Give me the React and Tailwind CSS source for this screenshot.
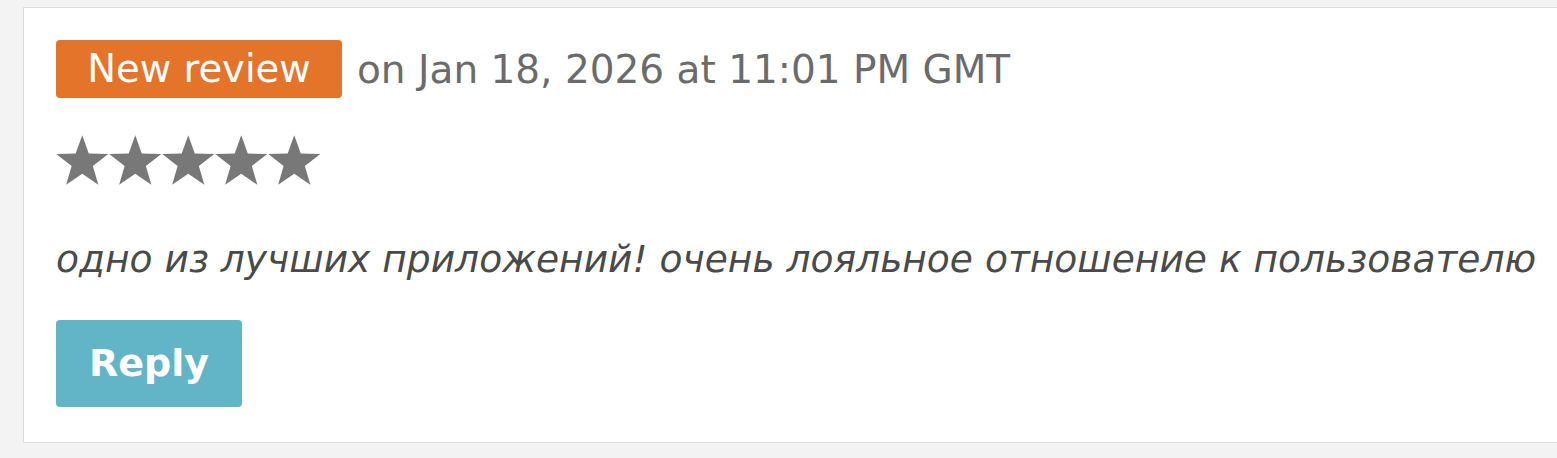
import React from "react";

function Star() {
  return (
    <svg width="52" height="50" viewBox="1 0.6 21.8 20.8" className="block">
      <path d="M12 0.6 L14.75 8.3 L22.9 8.5 L16.45 13.5 L18.75 21.4 L12 16.75 L5.25 21.4 L7.55 13.5 L1.1 8.5 L9.25 8.3 Z" fill="#787878" />
    </svg>
  );
}

export default function App() {
  return (
    <div className="w-[1557px] h-[458px] bg-[#f3f3f3] pt-[7px] pl-[23px] overflow-hidden" style={{ fontFamily: '"DejaVu Sans", Verdana, sans-serif' }}>
      <div className="h-[436px] bg-white border border-r-0 border-[#dcdcdc] pl-[32px] pt-[32px]">
        <div className="flex items-center h-[58px]">
          <span className="h-[58px] w-[286px] flex items-center justify-center rounded-[4px] bg-[#e3742a] text-white text-[38.5px] leading-none whitespace-nowrap">New review</span>
          <span className="ml-[15px] text-[#6b6b6b] text-[39px] leading-none whitespace-nowrap">on Jan 18, 2026 at 11:01 PM GMT</span>
        </div>
        <div className="flex gap-[1px] mt-[37px]">
          <Star /><Star /><Star /><Star /><Star />
        </div>
        <p className="mt-[56px] italic text-[37.6px] leading-none text-[#4a4a4a] whitespace-nowrap">одно из лучших приложений! очень лояльное отношение к пользователю</p>
        <button className="mt-[41px] w-[186px] h-[87px] rounded-[4px] bg-[#62b5c6] text-white font-bold text-[38px] leading-none flex items-center justify-center">Reply</button>
      </div>
    </div>
  );
}
